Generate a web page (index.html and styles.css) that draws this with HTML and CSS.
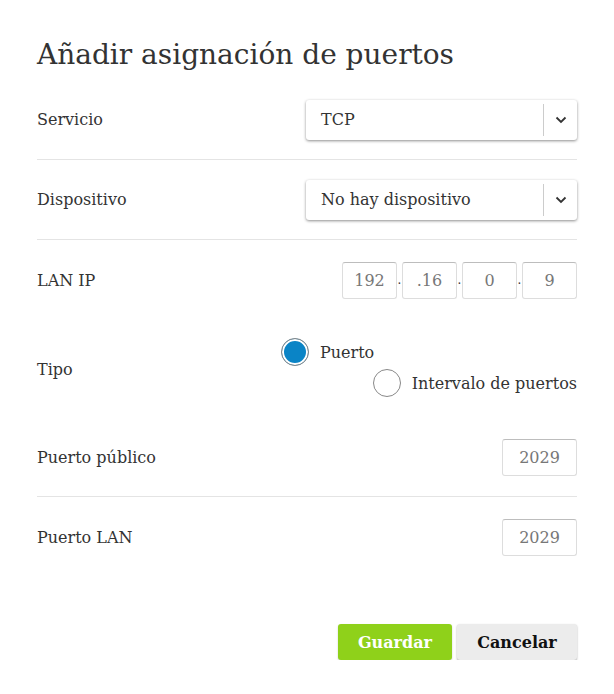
FILE: index.html
```
<!DOCTYPE html>
<html lang="es">
<head>
<meta charset="utf-8">
<title>Añadir asignación de puertos</title>
<link rel="stylesheet" href="styles.css">
</head>
<body>
<div class="dialog">
  <h1 class="title">Añadir asignación de puertos</h1>
  <div class="row bordered">
    <span class="label">Servicio</span>
    <div class="select"><span class="select-value">TCP</span><span class="select-arrow"><svg width="12" height="8" viewBox="0 0 12 8"><path d="M1.5 1.5 L6 6 L10.5 1.5" fill="none" stroke="#333" stroke-width="1.8"/></svg></span></div>
  </div>
  <div class="row bordered">
    <span class="label">Dispositivo</span>
    <div class="select"><span class="select-value">No hay dispositivo</span><span class="select-arrow"><svg width="12" height="8" viewBox="0 0 12 8"><path d="M1.5 1.5 L6 6 L10.5 1.5" fill="none" stroke="#333" stroke-width="1.8"/></svg></span></div>
  </div>
  <div class="row">
    <span class="label">LAN IP</span>
    <div class="ip">
      <span class="field ipf">192</span><span class="dot">.</span><span class="field ipf">.16</span><span class="dot">.</span><span class="field ipf">0</span><span class="dot">.</span><span class="field ipf">9</span>
    </div>
  </div>
  <div class="row tall">
    <span class="label">Tipo</span>
    <div class="radios">
      <label class="radio first"><span class="circle checked"></span><span>Puerto</span></label>
      <label class="radio second"><span class="circle"></span><span>Intervalo de puertos</span></label>
    </div>
  </div>
  <div class="row bordered short">
    <span class="label">Puerto público</span>
    <span class="field port">2029</span>
  </div>
  <div class="row">
    <span class="label">Puerto LAN</span>
    <span class="field port">2029</span>
  </div>
  <div class="actions">
    <button class="btn primary">Guardar</button>
    <button class="btn secondary">Cancelar</button>
  </div>
</div>
</body>
</html>
```
FILE: styles.css
```
* { box-sizing: border-box; }
html, body { margin: 0; padding: 0; background: #fff; }
body {
  font-family: "DejaVu Serif", serif;
  color: #333;
  font-size: 16px;
}
.dialog { padding: 0 37px; }
.title {
  margin: 0;
  height: 80px;
  padding-top: 37px;
  font-size: 28px;
  font-weight: normal;
  line-height: 36px;
  color: #333;
}
.row {
  height: 80px;
  display: flex;
  align-items: center;
  justify-content: space-between;
}
.row.bordered { border-bottom: 1px solid #e4e4e4; }
.row.tall { height: 98px; }
.row.short { height: 79px; }
.label { font-size: 16px; }
.select {
  width: 271px;
  height: 40px;
  border-radius: 3px;
  box-shadow: 0 1px 3px rgba(0,0,0,0.45);
  display: flex;
  align-items: center;
  background: #fff;
}
.select-value { flex: 1; padding-left: 15px; }
.select-arrow {
  width: 34px;
  height: 32px;
  border-left: 1px solid #ccc;
  display: flex;
  align-items: center;
  justify-content: center;
}
.ip { display: flex; align-items: center; }
.field {
  height: 37px;
  border: 1px solid #ddd;
  border-top-color: #bdbdbd;
  border-radius: 3px;
  display: flex;
  align-items: center;
  justify-content: center;
  color: #777;
  font-size: 16px;
}
.ipf { width: 55px; }
.dot { width: 5px; text-align: center; font-size: 12px; color: #333; }
.port { width: 75px; }
.radios {
  width: 296px;
  display: flex;
  flex-direction: column;
  gap: 3px;
  margin-top: -3px;
}
.radio { display: flex; align-items: center; gap: 11px; }
.radio.first { align-self: flex-start; }
.radio.second { align-self: flex-end; }
.circle {
  width: 28px;
  height: 28px;
  border-radius: 50%;
  border: 1px solid #888;
  background: #fff;
}
.circle.checked {
  background: #0a84c6;
  box-shadow: inset 0 0 0 2px #fff;
}
.actions {
  display: flex;
  justify-content: flex-end;
  gap: 5px;
  margin-top: 47px;
}
.btn {
  font-family: "DejaVu Serif", serif;
  font-weight: bold;
  font-size: 16px;
  height: 36px;
  border: none;
  border-radius: 3px;
  padding: 0;
}
.primary { width: 114px; background: #8fd11a; color: #fff; box-shadow: 0 1px 2px rgba(0,0,0,0.2); }
.secondary { width: 120px; background: #ececec; color: #111; box-shadow: 0 1px 2px rgba(0,0,0,0.35); }
```
